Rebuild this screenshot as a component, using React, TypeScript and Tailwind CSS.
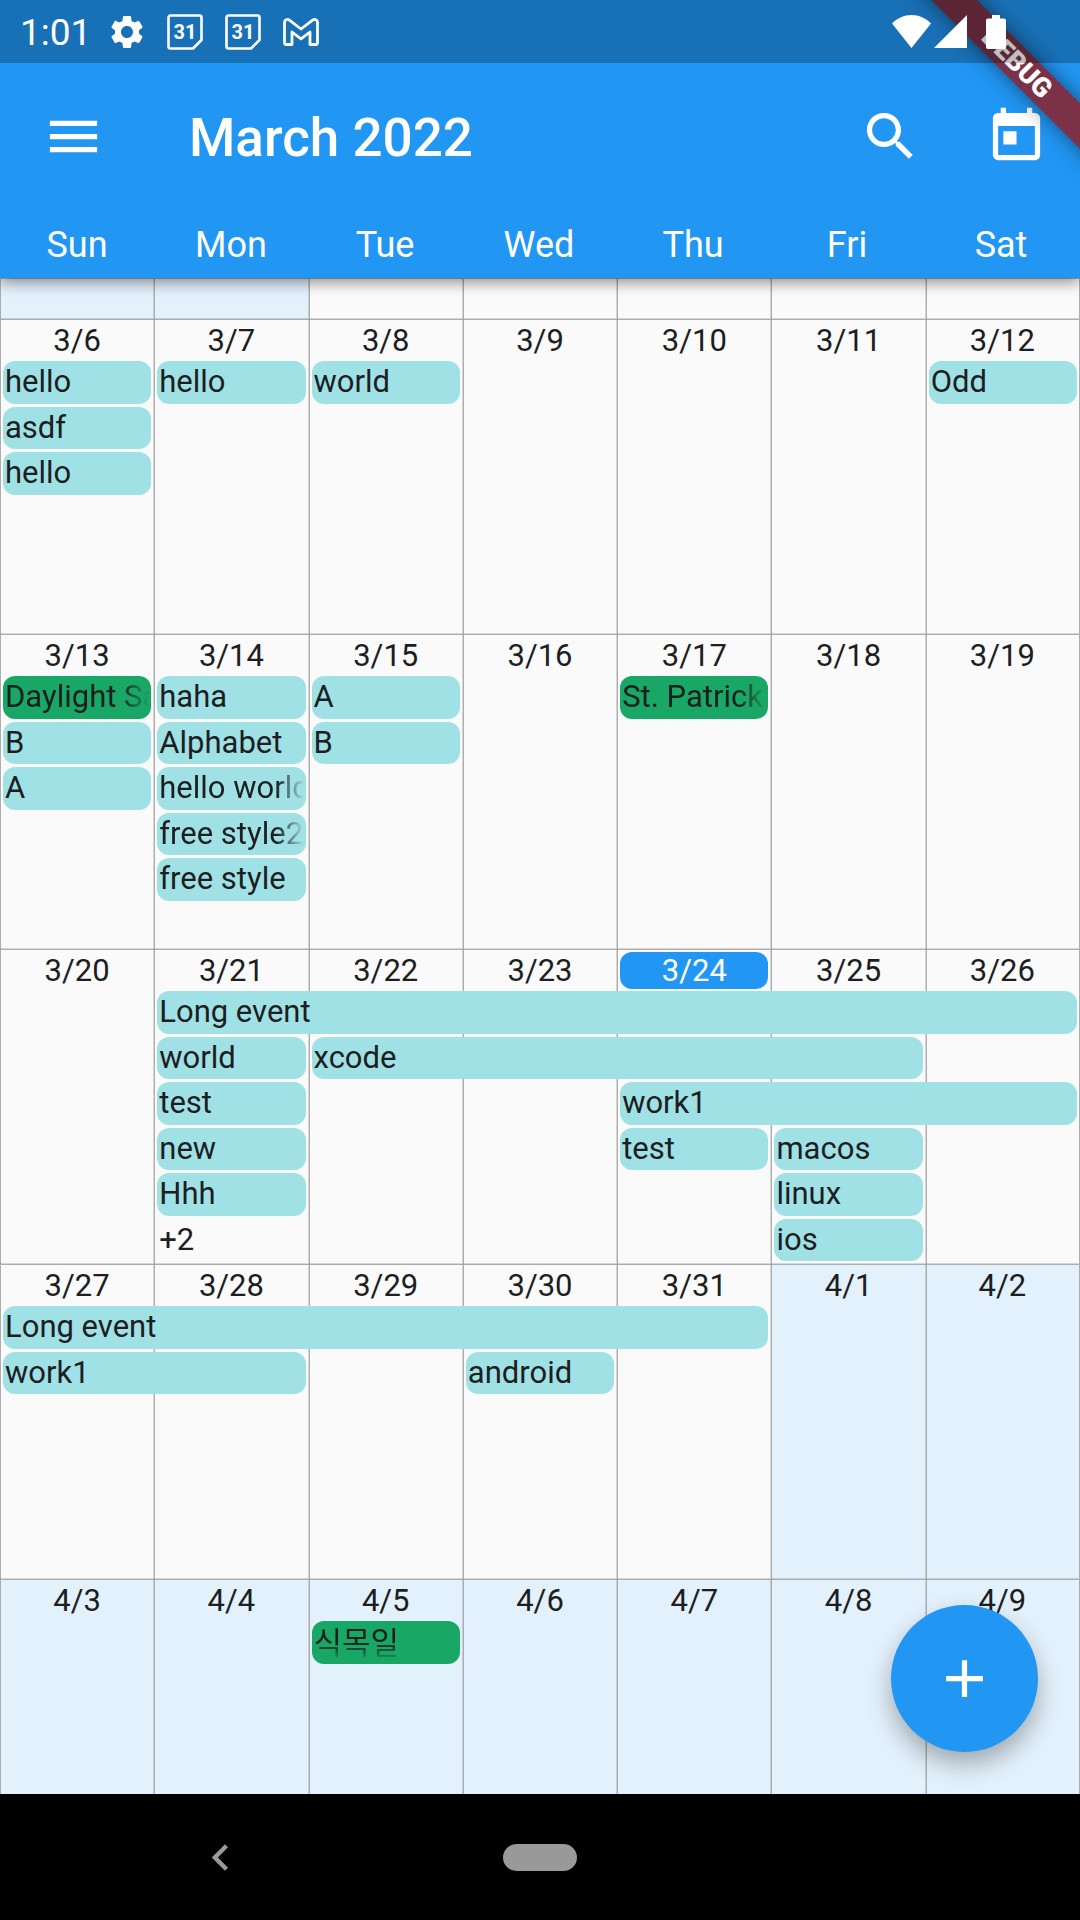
import React from "react";
import { MdAdd, MdChevronLeft, MdMenu, MdSearch, MdSettings, MdToday } from "react-icons/md";

type CalendarEvent = {
  title: string;
  day: number;
  lane: number;
  span?: number;
  holiday?: boolean;
  fade?: "right" | "bottom";
};

type Week = {
  days: string[];
  outside: number[];
  today?: number;
  events: CalendarEvent[];
  more?: { day: number; label: string };
};

const weekdays = ["Sun", "Mon", "Tue", "Wed", "Thu", "Fri", "Sat"];

const weeks: Week[] = [
  {
    days: ["3/6", "3/7", "3/8", "3/9", "3/10", "3/11", "3/12"],
    outside: [],
    events: [
      { title: "hello", day: 0, lane: 0 },
      { title: "asdf", day: 0, lane: 1 },
      { title: "hello", day: 0, lane: 2 },
      { title: "hello", day: 1, lane: 0 },
      { title: "world", day: 2, lane: 0 },
      { title: "Odd", day: 6, lane: 0 },
    ],
  },
  {
    days: ["3/13", "3/14", "3/15", "3/16", "3/17", "3/18", "3/19"],
    outside: [],
    events: [
      { title: "Daylight Saving", day: 0, lane: 0, holiday: true, fade: "right" },
      { title: "B", day: 0, lane: 1 },
      { title: "A", day: 0, lane: 2 },
      { title: "haha", day: 1, lane: 0 },
      { title: "Alphabet", day: 1, lane: 1 },
      { title: "hello world", day: 1, lane: 2, fade: "right" },
      { title: "free style2", day: 1, lane: 3, fade: "right" },
      { title: "free style", day: 1, lane: 4 },
      { title: "A", day: 2, lane: 0 },
      { title: "B", day: 2, lane: 1 },
      { title: "St. Patrick's Day", day: 4, lane: 0, holiday: true, fade: "right" },
    ],
  },
  {
    days: ["3/20", "3/21", "3/22", "3/23", "3/24", "3/25", "3/26"],
    outside: [],
    today: 4,
    events: [
      { title: "Long event", day: 1, lane: 0, span: 6 },
      { title: "world", day: 1, lane: 1 },
      { title: "xcode", day: 2, lane: 1, span: 4 },
      { title: "test", day: 1, lane: 2 },
      { title: "work1", day: 4, lane: 2, span: 3 },
      { title: "new", day: 1, lane: 3 },
      { title: "test", day: 4, lane: 3 },
      { title: "macos", day: 5, lane: 3 },
      { title: "Hhh", day: 1, lane: 4 },
      { title: "linux", day: 5, lane: 4 },
      { title: "ios", day: 5, lane: 5 },
    ],
    more: { day: 1, label: "+2" },
  },
  {
    days: ["3/27", "3/28", "3/29", "3/30", "3/31", "4/1", "4/2"],
    outside: [5, 6],
    events: [
      { title: "Long event", day: 0, lane: 0, span: 5 },
      { title: "work1", day: 0, lane: 1, span: 2 },
      { title: "android", day: 3, lane: 1 },
    ],
  },
  {
    days: ["4/3", "4/4", "4/5", "4/6", "4/7", "4/8", "4/9"],
    outside: [0, 1, 2, 3, 4, 5, 6],
    events: [{ title: "식목일", day: 2, lane: 0, holiday: true, fade: "bottom" }],
  },
];

const fades = {
  right: "[mask-image:linear-gradient(to_left,transparent,black_28px)]",
  bottom: "pt-1 [mask-image:linear-gradient(to_top,transparent,black_20px)]",
};

function CalendarBadge() {
  return (
    <svg viewBox="0 0 36 36" className="size-9" fill="none" aria-hidden="true">
      <path d="M3.5 1.5h29a2 2 0 0 1 2 2V26l-8.500 8.500H3.500a2 2 0 0 1-2-2v-29a2 2 0 0 1 2-2z" stroke="white" strokeWidth="2.600" strokeLinejoin="round" />
      <text x="18" y="25" textAnchor="middle" fill="white" fontSize="20" fontWeight="700">31</text>
    </svg>
  );
}

function MailBadge() {
  return (
    <svg viewBox="0 0 36 28" className="h-7 w-9" fill="none" aria-hidden="true">
      <path
        d="M1.500 4.500v20.500a1.500 1.500 0 0 0 1.500 1.500h6V14l9 6.800 9-6.800v12.500h6a1.500 1.500 0 0 0 1.500-1.500V4.500c0-2.600-2.800-3.900-4.900-2.400L18 11 6.400 2.100C4.300.6 1.500 1.900 1.500 4.500z"
        stroke="white"
        strokeWidth="2.800"
        strokeLinejoin="round"
      />
    </svg>
  );
}

function StatusBar() {
  return (
    <div className="relative z-20 flex h-[63px] items-center bg-black/25 pl-5 pr-[74px] text-white">
      <span className="w-[78px] pt-[2px] text-[37px] leading-none">1:01</span>
      <div className="grid grid-cols-4">
        {[
          <MdSettings key="settings" className="size-10" />,
          <CalendarBadge key="first" />,
          <CalendarBadge key="second" />,
          <MailBadge key="mail" />,
        ].map((icon, i) => (
          <span key={i} className="flex w-[58px] items-center justify-center">
            {icon}
          </span>
        ))}
      </div>
      <div className="ml-auto flex items-center">
        <svg viewBox="0 0 39 33" className="h-[33px] w-[39px]" fill="white" aria-label="Wi-Fi">
          <path d="M19.500 33L0 8.500C5.500 3 12 0 19.500 0S33.500 3 39 8.500z" />
        </svg>
        <svg viewBox="0 0 33 33" className="ml-[3px] size-[33px]" fill="white" aria-label="Signal">
          <path d="M0 33L33 0v33z" />
        </svg>
        <svg viewBox="0 0 20 34" className="ml-[19px] h-[34px] w-5" fill="white" aria-label="Battery">
          <path d="M6 0h8v3.400h4a2 2 0 0 1 2 2V32a2 2 0 0 1-2 2H2a2 2 0 0 1-2-2V5.400a2 2 0 0 1 2-2h4z" />
        </svg>
      </div>
    </div>
  );
}

function EventChip({ event }: { event: CalendarEvent }) {
  return (
    <button
      type="button"
      className={`z-10 mx-[3px] mb-[3px] flex min-w-0 items-center overflow-hidden rounded-xl px-[2px] text-left ${
        event.holiday ? "bg-[#18a765]" : "bg-[#a0e1e6]"
      }`}
      style={{
        gridRow: event.lane + 2,
        gridColumn: `${event.day + 1} / span ${event.span ?? 1}`,
      }}
    >
      <span className={`w-full overflow-hidden whitespace-nowrap ${event.fade ? fades[event.fade] : ""}`}>
        {event.title}
      </span>
    </button>
  );
}

function DayCell({ outside, column, children }: { outside: boolean; column: number; children?: React.ReactNode }) {
  return (
    <div
      className={`row-span-full border-l border-t border-[#adadad] shadow-[-1px_-1px_0_rgba(0,0,0,0.14)] last-of-type:border-r ${
        outside ? "bg-[#e3f1fc]" : "bg-[#fafafa]"
      }`}
      style={{ gridColumn: column + 1 }}
    >
      {children}
    </div>
  );
}

function WeekRow({ week }: { week: Week }) {
  return (
    <section className="grid h-[315px] shrink-0 grid-cols-7 grid-rows-[42px_repeat(6,minmax(0,1fr))]">
      {week.days.map((day, i) => (
        <DayCell key={day} outside={week.outside.includes(i)} column={i}>
          <time
            className={`ml-[2px] mr-[3px] mt-[2px] flex h-[37px] items-center justify-center rounded-xl ${
              week.today === i ? "bg-[#2196f3] text-white" : ""
            }`}
          >
            {day}
          </time>
        </DayCell>
      ))}
      {week.events.map((event) => (
        <EventChip key={`${event.day}-${event.lane}`} event={event} />
      ))}
      {week.more && (
        <span
          className="z-10 mx-[3px] mb-[3px] flex items-center px-[2px]"
          style={{ gridRow: 7, gridColumn: week.more.day + 1 }}
        >
          {week.more.label}
        </span>
      )}
    </section>
  );
}

export default function App() {
  return (
    <div className="relative flex h-screen flex-col overflow-hidden bg-[#fafafa] font-[Roboto,'Noto_Sans_CJK_KR',sans-serif] text-[#1c1e1f]">
      <header className="z-10 shrink-0 bg-[#2196f3] text-white shadow-[0_4px_14px_rgba(0,0,0,0.45)]">
        <StatusBar />
        <div className="flex h-[147px] items-center pr-px">
          <button type="button" aria-label="Menu" className="flex w-[147px] justify-center">
            <MdMenu className="size-[63px]" />
          </button>
          <h1 className="ml-[42px] flex-1 pt-1 text-[53px] font-medium leading-none">March 2022</h1>
          <button type="button" aria-label="Search" className="flex w-[126px] justify-center">
            <MdSearch className="size-[63px]" />
          </button>
          <button type="button" aria-label="Today" className="flex w-[126px] justify-center">
            <MdToday className="size-[63px]" />
          </button>
        </div>
        <div className="grid h-[68px] grid-cols-7 items-center pr-[2px] pt-[2px] text-center text-[36px] leading-none">
          {weekdays.map((name) => (
            <span key={name}>{name}</span>
          ))}
        </div>
        <div className="pointer-events-none absolute right-[-67px] top-[47px] z-10 flex h-8 w-[260px] rotate-45 items-center justify-center bg-[#7b3248] text-[27px] font-black leading-none shadow-[0_0_20px_rgba(0,0,0,0.5)]">
          DEBUG
        </div>
      </header>

      <main className="relative flex min-h-0 flex-1 flex-col overflow-hidden text-[31px] leading-9">
        <section className="grid h-[41px] shrink-0 grid-cols-7 overflow-hidden">
          {weekdays.map((name, i) => (
            <DayCell key={name} outside={i < 2} column={i} />
          ))}
        </section>
        {weeks.map((week) => (
          <WeekRow key={week.days[0]} week={week} />
        ))}
        <button
          type="button"
          aria-label="Add event"
          className="absolute bottom-[42px] right-[42px] z-20 flex size-[147px] items-center justify-center rounded-full bg-[#2196f3] text-white shadow-[0_12px_24px_rgba(0,0,0,0.3)]"
        >
          <MdAdd className="size-[63px]" />
        </button>
      </main>

      <nav className="z-10 grid h-[126px] shrink-0 grid-cols-[1fr_auto_1fr] items-center bg-black text-[#999999]">
        <button type="button" aria-label="Back" className="ml-[194px] w-[53px]">
          <MdChevronLeft className="size-[53px]" />
        </button>
        <button type="button" aria-label="Home" className="h-[27px] w-[74px] rounded-full bg-[#999999]" />
      </nav>
    </div>
  );
}
